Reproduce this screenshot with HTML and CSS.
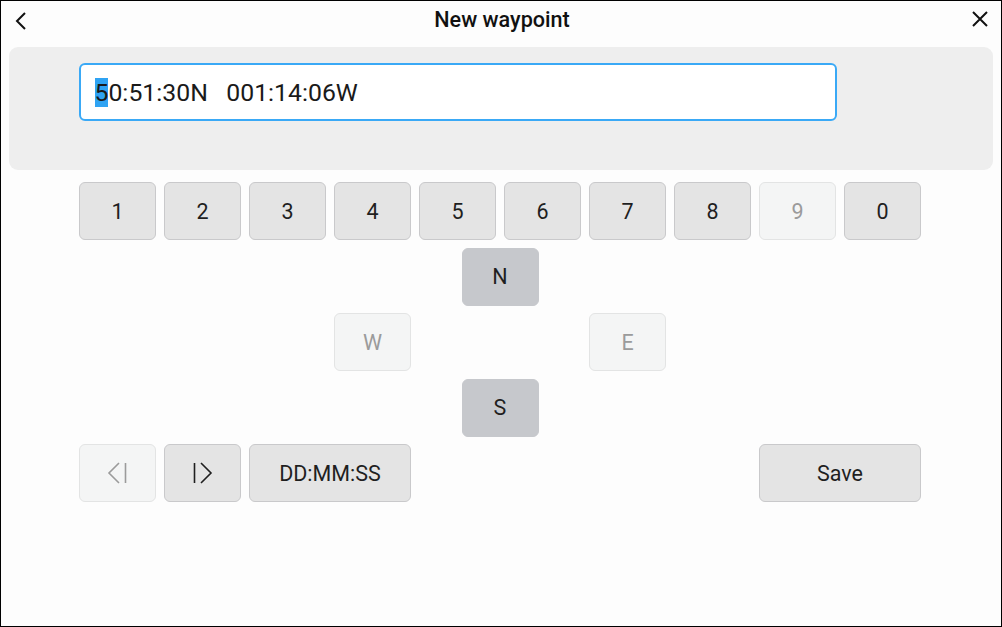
FILE: index.html
```html
<!DOCTYPE html>
<html lang="en">
<head>
<meta charset="utf-8">
<title>New waypoint</title>
<link rel="stylesheet" href="styles.css">
</head>
<body>
<div class="screen">
  <header class="topbar">
    <button class="icon-btn back" aria-label="Back">
      <svg width="14" height="20" viewBox="0 0 14 20"><path d="M10 2 L2 10 L10 18" fill="none" stroke="#111" stroke-width="2"/></svg>
    </button>
    <h1 class="title">New waypoint</h1>
    <button class="icon-btn close" aria-label="Close">
      <svg width="18" height="18" viewBox="0 0 18 18"><path d="M2 2 L16 16 M16 2 L2 16" fill="none" stroke="#111" stroke-width="2"/></svg>
    </button>
  </header>

  <section class="entry-panel">
    <div class="coord-input"><span class="sel">5</span>0:51:30N&nbsp;&nbsp;&nbsp;001:14:06W</div>
  </section>

  <div class="keypad">
    <div class="row grid">
      <button class="key">1</button>
      <button class="key">2</button>
      <button class="key">3</button>
      <button class="key">4</button>
      <button class="key">5</button>
      <button class="key">6</button>
      <button class="key">7</button>
      <button class="key">8</button>
      <button class="key disabled">9</button>
      <button class="key">0</button>
    </div>
    <div class="row center">
      <button class="key dir">N</button>
    </div>
    <div class="row grid">
      <button class="key disabled col4">W</button>
      <button class="key disabled col7">E</button>
    </div>
    <div class="row center">
      <button class="key dir">S</button>
    </div>
    <div class="row grid">
      <button class="key disabled" aria-label="Previous">
        <svg width="22" height="22" viewBox="0 0 22 22"><path d="M12 1 L2 11 L12 21 M18.5 1 V21" fill="none" stroke="#9b9b9b" stroke-width="1.6"/></svg>
      </button>
      <button class="key" aria-label="Next">
        <svg width="22" height="22" viewBox="0 0 22 22"><path d="M2.5 1 V21 M9 1 L19 11 L9 21" fill="none" stroke="#1f1f1f" stroke-width="1.6"/></svg>
      </button>
      <button class="key span2">DD:MM:SS</button>
      <button class="key span2 col9">Save</button>
    </div>
  </div>
</div>
</body>
</html>
```
FILE: styles.css
```css
* { box-sizing: border-box; }

html, body {
  margin: 0;
  padding: 0;
  background: #fdfdfd;
}

body {
  font-family: Roboto, "Liberation Sans", Arial, sans-serif;
  color: #1d1d1d;
}

.screen {
  width: 1002px;
  height: 627px;
  border: 1px solid #000;
  background: #fdfdfd;
  display: flex;
  flex-direction: column;
}

.topbar {
  height: 40px;
  display: flex;
  align-items: center;
  justify-content: space-between;
  padding: 0 12px 0 14px;
}

.icon-btn {
  border: 0;
  background: none;
  padding: 0;
  margin: 0;
  display: flex;
  width: 18px;
  justify-content: flex-start;
}

.icon-btn.close {
  justify-content: flex-end;
  margin-top: -4px;
}

.title {
  margin: 0;
  font-size: 21.6px;
  font-weight: 500;
  color: #111;
  margin-top: -3px;
}

.entry-panel {
  margin: 6px 8px 0 8px;
  height: 123px;
  background: #eeeeee;
  border-radius: 9px;
  padding: 16px 0 0 69.5px;
}

.coord-input {
  width: 758.5px;
  height: 58px;
  background: #fff;
  border: 2px solid #3aa9f6;
  border-radius: 6px;
  padding-left: 14px;
  display: flex;
  align-items: center;
  font-size: 24.8px;
  color: #1a1a1a;
  white-space: pre;
}

.sel {
  background: #2fa3f3;
}

.keypad {
  margin: 12px 0 0 78px;
  width: 842px;
  display: flex;
  flex-direction: column;
  gap: 7.5px;
}

.row.grid {
  display: grid;
  grid-template-columns: repeat(10, 77px);
  column-gap: 8px;
}

.row.center {
  display: flex;
  justify-content: center;
}

.key {
  width: 77px;
  height: 58px;
  margin: 0;
  padding: 0;
  border: 1px solid #c9c9cb;
  border-radius: 6px;
  background: #e4e4e4;
  font-family: Roboto, "Liberation Sans", Arial, sans-serif;
  font-size: 21.5px;
  color: #1f1f1f;
  display: flex;
  align-items: center;
  justify-content: center;
}

.key.dir {
  background: #c6c8cc;
  border-color: #c6c8cc;
}

.key.disabled {
  background: #f4f5f5;
  border-color: #e3e4e4;
  color: #9b9b9b;
}

.key.span2 {
  width: auto;
  grid-column: span 2;
}

.key.col4 { grid-column: 4; }
.key.col7 { grid-column: 7; }
.key.col9 { grid-column: 9 / span 2; }
```
